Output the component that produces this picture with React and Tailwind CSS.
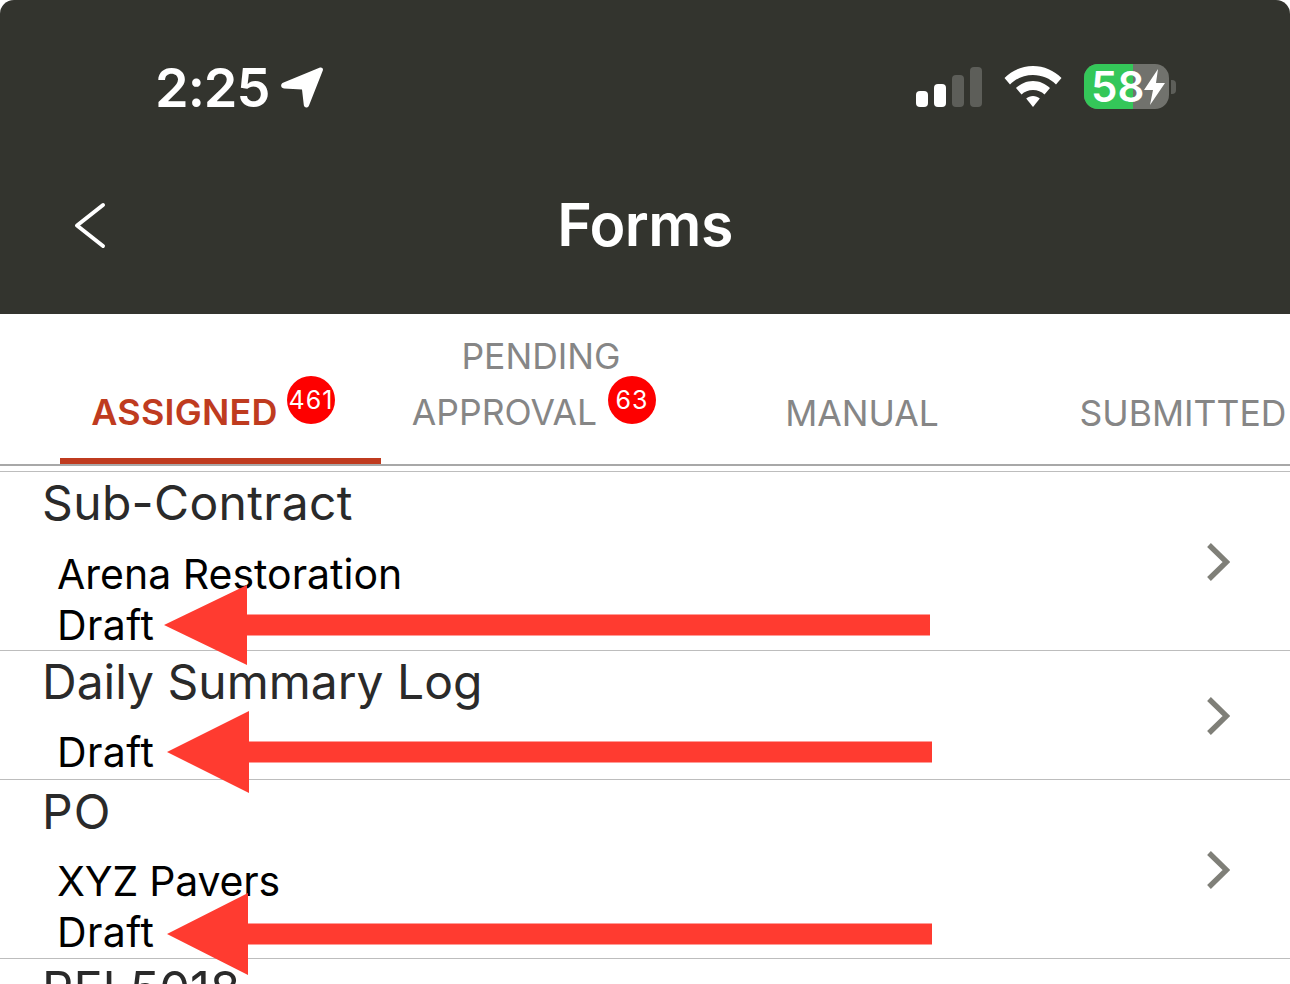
const sans = "font-['Inter','Liberation_Sans',sans-serif]";

const Chevron = ({ className }) => (
  <svg viewBox="0 0 24 38" className={className} fill="none" stroke="#7f7f78" strokeWidth="5.4">
    <path d="M3 2 L20.5 19 L3 36" />
  </svg>
);

// red annotation arrow drawn over the list
const Arrow = ({ className, x1, x2, head, half, thick }) => {
  const w = x2 - x1;
  return (
    <svg viewBox={`0 0 ${w} ${half * 2}`} width={w} height={half * 2} className={className}>
      <path
        fill="#ff3b30"
        d={`M0 ${half} L${head} 0 L${head} ${half - thick / 2} L${w} ${half - thick / 2} L${w} ${half + thick / 2} L${head} ${half + thick / 2} L${head} ${half * 2} Z`}
      />
    </svg>
  );
};

const Tab = ({ children, className }) => (
  <div className={`flex shrink-0 items-end justify-center whitespace-nowrap pb-[22px] text-[35.5px] leading-[56px] text-[#868686] ${className}`}>
    {children}
  </div>
);

const Badge = ({ children, className }) => (
  <span className={`absolute flex h-[48px] w-[48px] items-center justify-center rounded-full bg-[#fe0000] text-[25px] leading-none tracking-[1px] text-white ${className}`}>
    {children}
  </span>
);

const Row = ({ title, sub, height, titleClass, subClass, children }) => (
  <div className={`relative flex border-b border-[#bdbdbd] pl-[42px] pr-[60px] ${height}`}>
    <div className="flex-1">
      <div className={`text-[48px] leading-[60px] text-[#2a2a2a] ${titleClass}`}>{title}</div>
      <div className="pl-[15px] text-[41px] leading-[51px] text-black">
        {sub && <div className={subClass}>{sub}</div>}
        <div className="tracking-[0.4px]">Draft</div>
      </div>
    </div>
    <div className="flex items-center pt-[2px]">
      <Chevron className="h-[38px] w-[24px]" />
    </div>
    {children}
  </div>
);

export default function App() {
  return (
    <div className={`${sans} h-[984px] w-[1290px] overflow-hidden bg-white`}>
      {/* Status + nav */}
      <div className="relative h-[314px] rounded-t-[14px] bg-[#33342e] text-white">
        <div className="flex h-[176px] items-start pt-[58px]">
          <div className="ml-[155px] flex items-center gap-[12px]">
            <span className="text-[54px] font-semibold leading-[60px] tracking-[-1px]">2:25</span>
            <svg viewBox="0 0 42 42" className="h-[42px] w-[42px]" fill="#fff">
              <path d="M39 0.5 C41 0 42.5 1.5 41.8 3.5 L28 38.5 C26.8 41.5 23 41 22.8 38 L21 22.5 L3 21.5 C-0.5 21.2 -0.8 17 2 15.8 Z" />
            </svg>
          </div>
          <div className="ml-auto mr-[114px] flex items-center pt-[6px]">
            <div className="flex items-end gap-[6px]">
              <span className="h-[16px] w-[12px] rounded-[4px] bg-white" />
              <span className="h-[23px] w-[12px] rounded-[4px] bg-white" />
              <span className="h-[32px] w-[12px] rounded-[4px] bg-[#5d5e59]" />
              <span className="h-[40px] w-[12px] rounded-[4px] bg-[#5d5e59]" />
            </div>
            <svg viewBox="0 0 58 42" className="ml-[22px] h-[42px] w-[58px]" fill="#fff">
              <path d="M29 0 C40 0 50 4.5 57.5 12 L52 18.5 C46 12.5 38 9 29 9 C20 9 12 12.5 6 18.5 L0.5 12 C8 4.5 18 0 29 0 Z" />
              <path d="M29 15 C35.5 15 41.5 17.8 46 22 L40.5 28.5 C37.5 25.6 33.5 24 29 24 C24.5 24 20.5 25.6 17.5 28.5 L12 22 C16.5 17.8 22.5 15 29 15 Z" />
              <path d="M29 30 C31.5 30 34 31 35.8 32.6 L29 41 L22.2 32.6 C24 31 26.500 30 29 30 Z" />
            </svg>
            <div className="relative ml-[22px] flex h-[45px] w-[85px] rounded-[14px] bg-[#71726d]">
              <div className="h-full w-[49px] rounded-l-[14px] bg-[#34c759]" />
              <span className="absolute left-[7px] top-0 text-[42px] font-semibold leading-[45px] text-white">58</span>
              <svg viewBox="0 0 22 36" className="absolute left-[60px] top-[5px] h-[36px] w-[22px]" fill="#fff">
                <path d="M14 0 L0 21 H9 L6 36 L21 14 H12 Z" />
              </svg>
            </div>
            <span className="ml-[2px] h-[14px] w-[5px] rounded-r-[4px] bg-[#5d5e59]" />
          </div>
        </div>
        <svg viewBox="0 0 34 48" className="absolute left-[73px] top-[201px] h-[48px] w-[34px]" fill="none" stroke="#fff" strokeWidth="4" strokeLinecap="round" strokeLinejoin="round">
          <path d="M30 4 L4 24.500 L30 45" />
        </svg>
        <div className="absolute left-0 right-0 top-[191px] text-center text-[59px] font-semibold leading-[68px] tracking-[-0.5px]">
          Forms
        </div>
      </div>

      {/* Tabs */}
      <div className="relative flex h-[152px] border-b-2 border-[#a8a8a8]">
        <div className="relative flex w-[381px] shrink-0 items-end justify-center pb-[24px] pl-[60px]">
          <span className="pr-[72px] text-[36px] font-semibold leading-[56px] tracking-[0.2px] text-[#bf3b1f]">ASSIGNED</span>
          <Badge className="left-[287px] top-[62px]">461</Badge>
          <span className="absolute bottom-0 left-[60px] h-[6px] w-[321px] bg-[#bf3b1f]" />
        </div>
        <div className="relative flex w-[320px] shrink-0 flex-col items-center justify-end pb-[23px]">
          <div className="text-center text-[35.5px] leading-[56px] text-[#868686]">
            <div>PENDING</div>
            <div className="pr-[73px]">APPROVAL</div>
          </div>
          <Badge className="left-[227px] top-[62px]">63</Badge>
        </div>
        <Tab className="w-[322px]">MANUAL</Tab>
        <Tab className="w-[320px]">SUBMITTED</Tab>
      </div>

      {/* List */}
      <div className="mt-[5px] border-t border-[#bdbdbd]">
        <Row title="Sub-Contract" sub="Arena Restoration" height="h-[179px]" titleClass="h-[77px] pt-[1px] tracking-[0.35px]">
          <Arrow className="absolute left-[164px] top-[113px]" x1={164} x2={930} head={83} half={40} thick={21} />
        </Row>
        <Row title="Daily Summary Log" height="h-[129px]" titleClass="h-[76px] pt-[1px]">
          <Arrow className="absolute left-[167px] top-[60px]" x1={167} x2={932} head={82} half={41} thick={21} />
        </Row>
        <Row title="PO" sub="XYZ Pavers" subClass="tracking-[-0.2px]" height="h-[179px]" titleClass="h-[76px] pt-[2px] tracking-[1px]">
          <Arrow className="absolute left-[167px] top-[113px]" x1={167} x2={932} head={81} half={41} thick={21} />
        </Row>
        <div className="pl-[42px] pt-[1px] text-[49px] leading-[60px] text-[#2a2a2a]">RFI 5018</div>
      </div>
    </div>
  );
}
